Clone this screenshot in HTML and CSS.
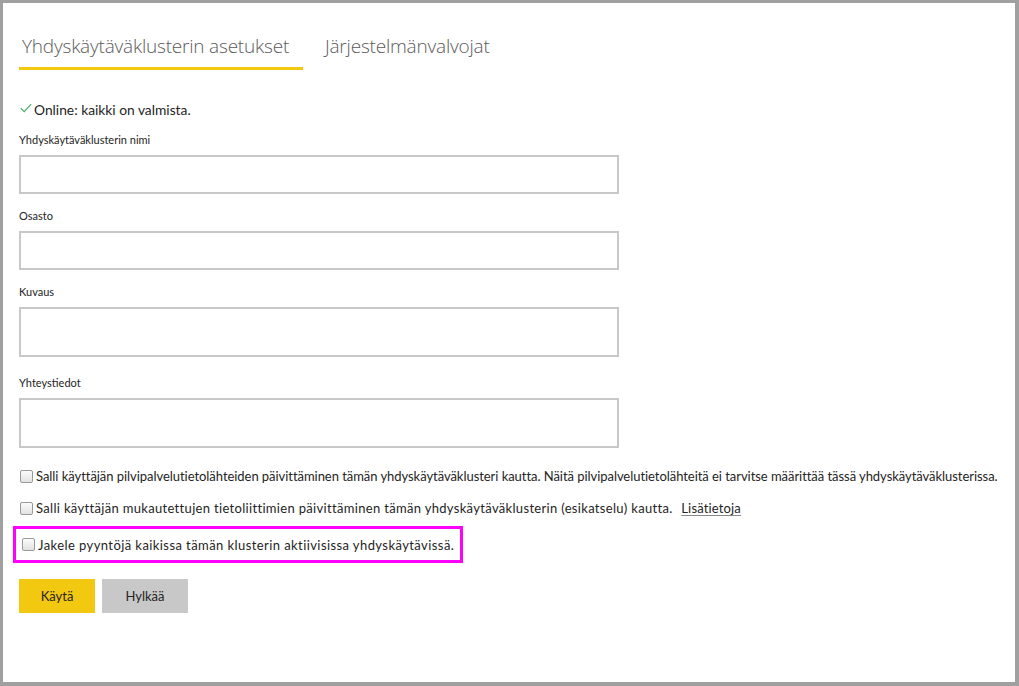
FILE: index.html
```html
<!DOCTYPE html>
<html lang="fi">
<head>
<meta charset="utf-8">
<link rel="stylesheet" href="styles.css">
</head>
<body>
<div class="frame">
  <div class="tabs">
    <div class="tab active">Yhdyskäytäväklusterin asetukset</div>
    <div class="tab">Järjestelmänvalvojat</div>
  </div>
  <div class="status">
    <svg class="check" width="12" height="10" viewBox="0 0 12 10"><path d="M0.8 5.2 L4.2 8.6 L11.2 1.2" fill="none" stroke="#3fae6a" stroke-width="1.1"/></svg>
    <span>Online: kaikki on valmista.</span>
  </div>
  <div class="field">
    <label class="label">Yhdyskäytäväklusterin nimi</label>
    <div class="input"></div>
  </div>
  <div class="field">
    <label class="label">Osasto</label>
    <div class="input"></div>
  </div>
  <div class="field tall">
    <label class="label">Kuvaus</label>
    <div class="input area"></div>
  </div>
  <div class="field">
    <label class="label">Yhteystiedot</label>
    <div class="input area"></div>
  </div>
  <div class="checks">
    <div class="check-row first"><span class="box"></span><span>Salli käyttäjän pilvipalvelutietolähteiden päivittäminen tämän yhdyskäytäväklusteri kautta. Näitä pilvipalvelutietolähteitä ei tarvitse määrittää tässä yhdyskäytäväklusterissa.</span></div>
    <div class="check-row second"><span class="box"></span><span>Salli käyttäjän mukautettujen tietoliittimien päivittäminen tämän yhdyskäytäväklusterin (esikatselu) kautta. <a class="link">Lisätietoja</a></span></div>
    <div class="highlight">
      <div class="check-row third"><span class="box"></span><span>Jakele pyyntöjä kaikissa tämän klusterin aktiivisissa yhdyskäytävissä.</span></div>
    </div>
  </div>
  <div class="buttons">
    <button class="btn primary">Käytä</button>
    <button class="btn secondary">Hylkää</button>
  </div>
</div>
</body>
</html>
```

FILE: styles.css
```css
* { box-sizing: border-box; }
html, body { margin: 0; padding: 0; background: #fff; }
body {
  font-family: Lato, "Open Sans", sans-serif;
  color: #252423;
}
.frame {
  width: 1019px;
  height: 686px;
  border-style: solid;
  border-color: #a0a0a0;
  border-width: 3px 4px 4px 3px;
  padding: 0 0 0 16px;
  display: flex;
  flex-direction: column;
  align-items: flex-start;
}
.tabs {
  display: flex;
  gap: 19px;
  margin-top: 31px;
}
.tab {
  font-family: "Open Sans", sans-serif;
  font-size: 19px;
  font-weight: 300;
  color: #5a5a5a;
  padding: 0 0 0 3px;
  height: 36px;
  line-height: 24px;
  letter-spacing: -0.2px;
}
.tab.active {
  width: 284px;
  border-bottom: 3px solid #f2c811;
}
.status {
  display: flex;
  align-items: center;
  margin-top: 30px;
  margin-left: 1px;
  font-size: 13.8px;
  color: #252423;
  height: 18px;
}
.check { margin-right: 2px; margin-top: -3px; }
.field {
  display: flex;
  flex-direction: column;
  margin-top: 15px;
}
.field + .field { margin-top: 15px; }
.field.tall + .field { margin-top: 19px; }
.label {
  display: block;
  font-size: 11px;
  line-height: 14px;
  height: 14px;
  color: #252423;
  margin-bottom: 8px;
}
.input {
  width: 600px;
  height: 39px;
  border: 2px solid #c8c8c8;
}
.input.area { height: 50px; }
.checks {
  display: flex;
  flex-direction: column;
  margin-top: 19px;
}
.check-row {
  display: flex;
  align-items: center;
  font-size: 13px;
  height: 18px;
  color: #252423;
  margin-left: 1px;
  white-space: nowrap;
}
.check-row.first { margin-bottom: 14px; letter-spacing: -0.05px; }
.check-row.second { margin-bottom: 9px; letter-spacing: 0.32px; }
.check-row.third { letter-spacing: 0.42px; }
.box {
  width: 13px;
  height: 13px;
  border: 1px solid #9a9a9a;
  border-radius: 2px;
  background: linear-gradient(#fbfbfb, #e2e2e2);
  margin-right: 3px;
  flex: none;
}
.link {
  color: #252423;
  text-decoration: underline;
  text-decoration-color: #888;
  text-underline-offset: 2px;
  margin-left: 5px;
  letter-spacing: 0.15px;
}
.highlight {
  margin-left: -6px;
  width: 450px;
  height: 37px;
  border: 3px solid #ff00ff;
  display: flex;
  align-items: center;
  padding-left: 5px;
}
.buttons {
  display: flex;
  gap: 7px;
  margin-top: 16px;
}
.btn {
  font-family: inherit;
  font-size: 13px;
  height: 34px;
  border: none;
  color: #252423;
  padding: 0;
}
.btn.primary { width: 76px; background: #f2c811; }
.btn.secondary { width: 86px; background: #c8c8c8; }
```
